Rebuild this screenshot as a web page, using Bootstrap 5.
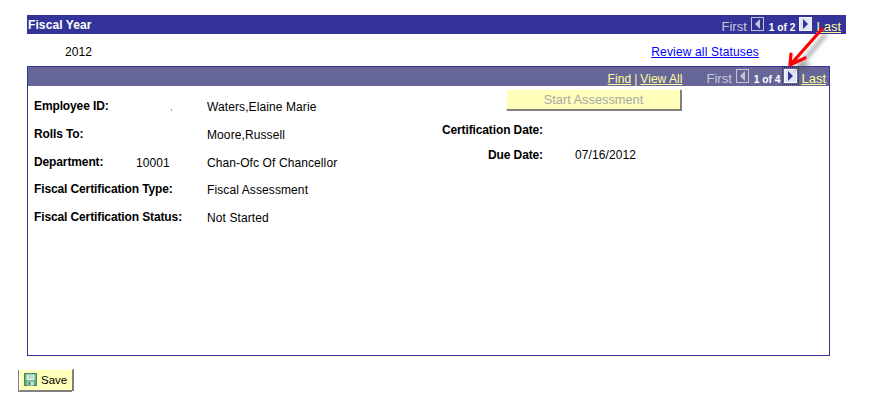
<!DOCTYPE html>
<html lang="en"><head><meta charset="utf-8"><title>Fiscal Year</title>
<link href="https://cdn.jsdelivr.net/npm/bootstrap@5.3.0/dist/css/bootstrap.min.css" rel="stylesheet">
<style>
html,body{margin:0;background:#fff}
body{font:12px/14px "Liberation Sans",Arial,sans-serif;letter-spacing:.1px;color:#000;width:886px;height:406px;overflow:hidden;position:relative}
b{letter-spacing:-.12px}
.page-wrap{padding:15px 0 0 27px}
.bar-top{width:819px;height:19px;background:#333399;color:#fff;font-weight:700;padding:3px 0 0 1px}
.pager{color:#c8c8d8;font-weight:400;font-size:13px;margin-top:2px;letter-spacing:0}
.pager a{color:#ffff99;text-decoration:underline}
.pager b{color:#fff;font-size:10.2px;font-weight:700;margin:1px 4px 0 5px;letter-spacing:0}
.pad-top{padding-right:5px}
.pad-sub{padding-right:1px}
.pg-btn{width:13px;height:14px;margin-top:-3px;border:1px solid #c4c4d4;background:transparent;display:inline-flex;align-items:center;justify-content:center}
.pg-btn.live{background:#dfe6f5;border-color:#f4f6ff}
.focus-dots{outline:1px dotted #2a2a40;outline-offset:1px}
.pg-btn svg{display:block}
.fy-row{width:732px;height:32px;padding:11px 0 0 38px}
.fy-row a{color:#0000ff;text-decoration:underline;letter-spacing:.16px}
.panel-box{width:803px;height:290px;border:1px solid #333399}
.bar-sub{height:19px;background:#666699;padding:3px 2px 0 0}
.sub-links{font-size:12px;letter-spacing:.05px}
.sep-bar{color:#ffff99;margin:0 3px}
.gap-first{margin-left:24px}
.form-area{padding-top:3px}
.col-left{width:404px;padding:11px 0 0 6px}
.f-row{display:grid;grid-template-columns:102px 71px 1fr;height:27.75px}
.f-row b{white-space:nowrap;margin-top:-1px}
.tick{color:#1a8fd0;font-size:9px;line-height:14px;margin-left:34px}
.btn-start,.btn-start:disabled{width:175px;height:21px;margin:0 0 0 74px;padding:0;border:1px solid;border-color:#fff #808080 #808080 #fff;box-shadow:1px 1px 0 #808080;background:#ffffb9;color:#a8a8a8;font:12.8px "Liberation Sans",Arial,sans-serif;display:block;border-radius:0;opacity:1}
.d-row{display:grid;grid-template-columns:102px 1fr;column-gap:32px;margin-left:9px}
.d-row b{text-align:right;white-space:nowrap}
.row-cert{margin-top:13px}
.row-due{margin-top:11px}
.btn-save{margin:13px 0 0 -8px;width:54px;height:22px;padding:0 0 1px 4px;border:1px solid;border-color:#fff #808080 #808080 #fff;box-shadow:-1px 1px 0 #808080,1px 0 0 #808080;background:#ffffb9;color:#000;font:11.5px "Liberation Sans",Arial,sans-serif;border-radius:0;gap:4px}
.arrow-over{position:absolute;left:775px;top:15px;pointer-events:none}
</style></head>
<body>
<div class="page-wrap">
  <div class="bar-top d-flex justify-content-between">
    <span>Fiscal Year</span>
    <span class="pager pad-top d-flex align-items-start">
      <span>First</span>
      <span class="pg-btn ms-1"><svg width="7" height="10"><path d="M6 0v10L1 5z" fill="#c4c4d4"/></svg></span>
      <b>1 of 2</b>
      <span class="pg-btn live"><svg width="7" height="10"><path d="M1 0v10l5-5z" fill="#333399"/></svg></span>
      <a class="ms-1" href="#">Last</a>
    </span>
  </div>
  <div class="fy-row d-flex justify-content-between">
    <span>2012</span>
    <a href="#">Review all Statuses</a>
  </div>
  <div class="panel-box">
    <div class="bar-sub d-flex justify-content-end">
      <span class="pager pad-sub d-flex align-items-start">
        <span class="sub-links"><a href="#">Find</a><span class="sep-bar">|</span><a href="#">View All</a></span>
        <span class="gap-first">First</span>
        <span class="pg-btn ms-1"><svg width="7" height="10"><path d="M6 0v10L1 5z" fill="#c4c4d4"/></svg></span>
        <b>1 of 4</b>
        <span class="pg-btn live focus-dots"><svg width="7" height="10"><path d="M1 0v10l5-5z" fill="#333399"/></svg></span>
        <a class="ms-1" href="#">Last</a>
      </span>
    </div>
    <div class="form-area d-flex">
      <div class="col-left">
        <div class="f-row"><b>Employee ID:</b><span class="tick">,</span><span>Waters,Elaine Marie</span></div>
        <div class="f-row"><b>Rolls To:</b><span></span><span>Moore,Russell</span></div>
        <div class="f-row"><b>Department:</b><span>10001</span><span>Chan-Ofc Of Chancellor</span></div>
        <div class="f-row"><b>Fiscal Certification Type:</b><span></span><span>Fiscal Assessment</span></div>
        <div class="f-row"><b>Fiscal Certification Status:</b><span></span><span>Not Started</span></div>
      </div>
      <div>
        <button class="btn btn-start" disabled>Start Assessment</button>
        <div class="d-row row-cert"><b>Certification Date:</b><span></span></div>
        <div class="d-row row-due"><b>Due Date:</b><span>07/16/2012</span></div>
      </div>
    </div>
  </div>
  <button class="btn btn-save d-flex align-items-center">
    <svg width="13" height="13" viewBox="0 0 13 13"><rect x=".5" y=".5" width="12" height="12" fill="#5fb585" stroke="#3f8a62"/><rect x="2.5" y="1.5" width="8" height="5.5" fill="#f2f8ee"/><path d="M3.5 3h6M3.5 5h6" stroke="#8fbf9f"/><rect x="3.5" y="8.5" width="6" height="4" fill="#dbe5dd"/><rect x="4.5" y="9" width="2" height="3" fill="#3f8a62"/></svg>
    <span>Save</span>
  </button>
</div>
<svg class="arrow-over" width="70" height="72" viewBox="775 15 70 72">
  <defs><filter id="sh" x="-30%" y="-30%" width="170%" height="170%"><feGaussianBlur stdDeviation="2"/></filter></defs>
  <path d="M826 34 796 70M809 64 796 70" stroke="#555" stroke-width="3.5" opacity=".6" fill="none" filter="url(#sh)"/>
  <path d="M822 29 791 64M790 65 791 54M790 65 805 58" stroke="#f00" stroke-width="3.2" fill="none" stroke-linecap="round"/>
</svg>
</body></html>
